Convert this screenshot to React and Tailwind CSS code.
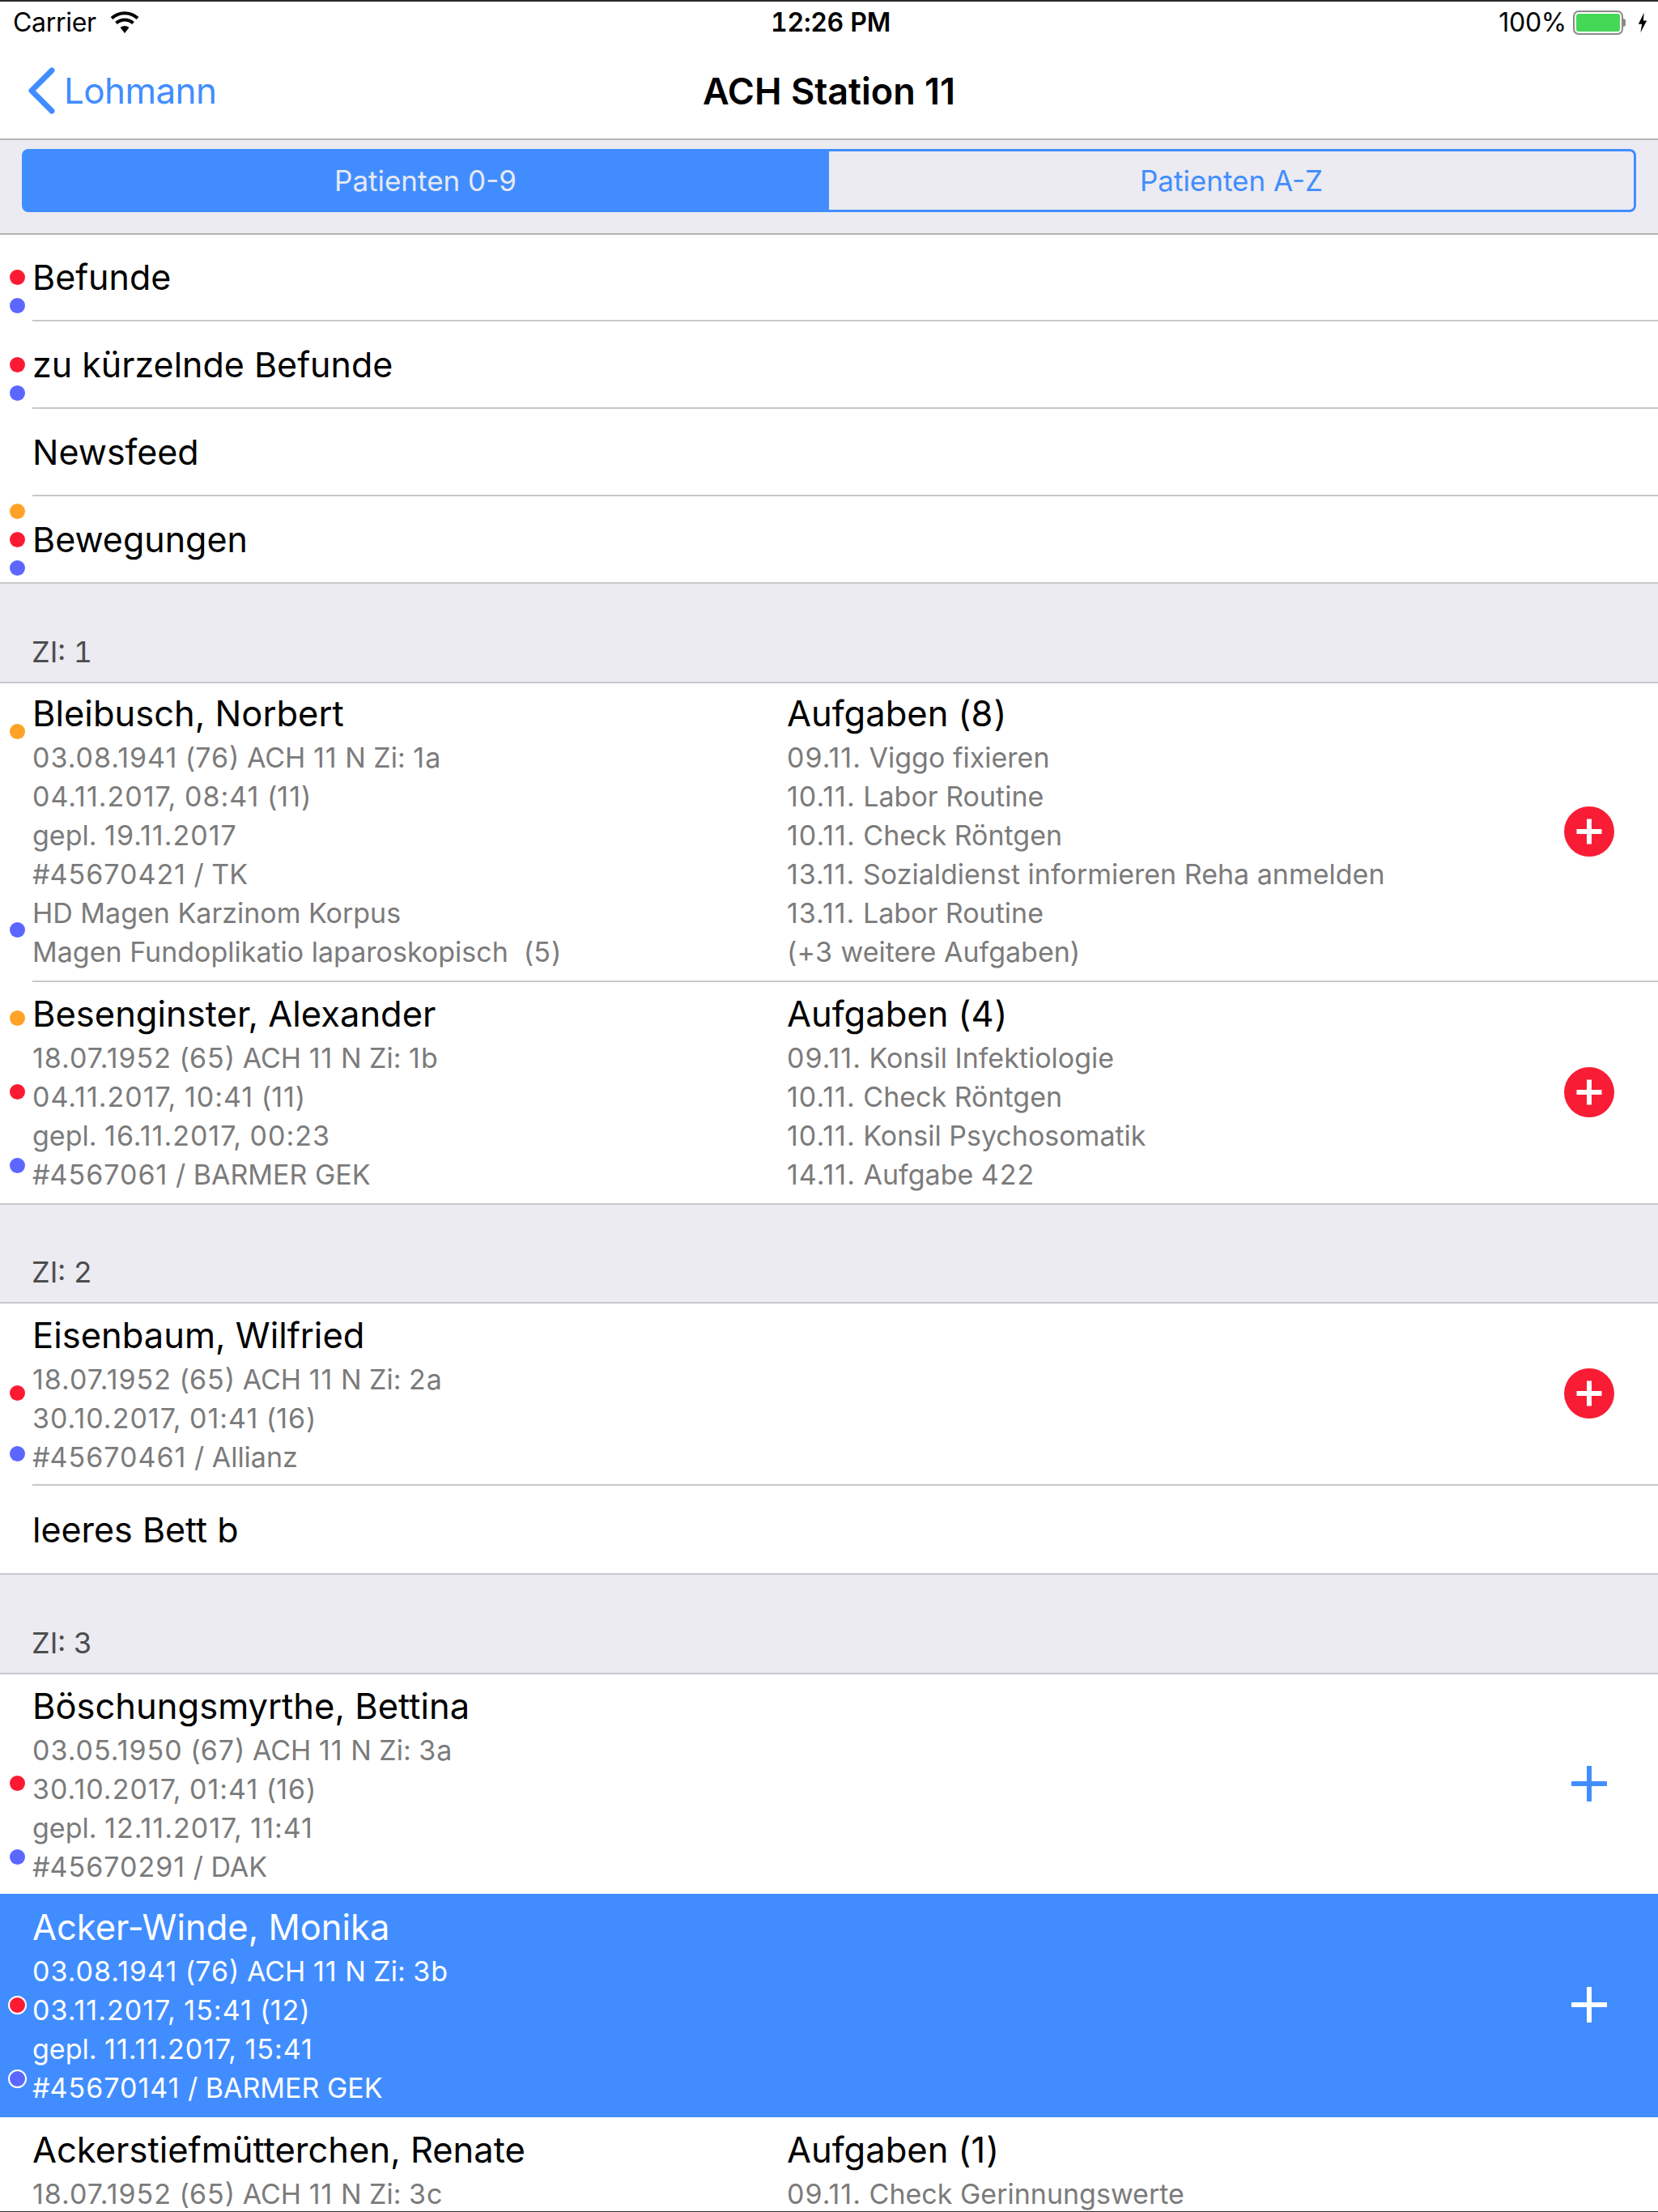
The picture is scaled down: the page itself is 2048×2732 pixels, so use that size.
const FONT = "font-['Inter',sans-serif]"

// digits sit a little wider in the reference's font
const spaced = (text) =>
  text.split(/(\d[\d.:,]*)/).map((part, i) =>
    i % 2 ? <span key={i} className="tracking-[1px]">{part}</span> : part
  )

const Dot = ({ color, top, ring }) => (
  <span
    className={`absolute left-[12px] block rounded-full ${color} ${top} ${ring ? 'w-[23px] h-[23px] -ml-[2px] -mt-[2px] border-[2px] border-white' : 'w-[19px] h-[19px]'}`}
  />
)

function RedPlus() {
  return (
    <svg width="62" height="62" viewBox="0 0 62 62">
      <circle cx="31" cy="31" r="31" fill="#f81d35" />
      <path d="M15.5 31h31M31 15.5v31" stroke="#fff" strokeWidth="6" />
    </svg>
  )
}

function LinePlus({ color }) {
  return (
    <svg width="44" height="44" viewBox="0 0 44 44">
      <path d="M1.5 22h41M22 1.5v41" stroke={color} strokeWidth="6" strokeLinecap="round" />
    </svg>
  )
}

function MenuRow({ label, dots, last, height = 'h-[108px]' }) {
  return (
    <div className={`relative flex flex-col bg-white ${height}`}>
      {dots.map((d, i) => <Dot key={i} {...d} />)}
      <div className="flex-1 pl-[40px] flex items-center text-[43px] text-black">{label}</div>
      <div className={`h-[2px] bg-[#c8c7cc] ${last ? '' : 'ml-[40px]'}`} />
    </div>
  )
}

function SectionHeader({ label, height = 'h-[123px]' }) {
  return (
    <div className={`bg-[#ebebf1] flex flex-col justify-end ${height}`}>
      <div className="pl-[39px] pb-[15px] text-[36px] leading-[44px] tabular-nums text-[#4d4d4f]">{label}</div>
      <div className="h-[2px] bg-[#c8c7cc]" />
    </div>
  )
}

function TextColumn({ title, lines, main, sub }) {
  return (
    <>
      <div className={`h-[56px] leading-[50px] text-[43.5px] ${main}`}>{spaced(title)}</div>
      {lines.map((l) => (
        <div key={l} className={`h-[48px] leading-[48px] text-[34px] whitespace-pre ${sub}`}>{spaced(l)}</div>
      ))}
    </>
  )
}

function PatientRow({ name, lines, tasksTitle, tasks, dots, action, selected, last, cut, height, pt = 'pt-[14px]' }) {
  const main = selected ? 'text-white' : 'text-black'
  const sub = selected ? 'text-white' : 'text-[#7b7b7b]'
  return (
    <div className={`relative flex flex-col ${height} ${selected ? 'bg-[#418dff]' : 'bg-white'}`}>
      {dots.map((d, i) => <Dot key={i} ring={selected} {...d} />)}
      <div className="flex-1 min-h-0 flex pl-[40px]">
        <div className={`w-[932px] shrink-0 ${pt}`}>
          <TextColumn title={name} lines={lines} main={main} sub={sub} />
        </div>
        <div className={`flex-1 ${pt}`}>
          {tasks && <TextColumn title={tasksTitle} lines={tasks} main={main} sub={sub} />}
        </div>
        {action && (
          <div className="w-[170px] shrink-0 pb-[2px] flex items-center justify-center">{action}</div>
        )}
      </div>
      {!selected && !cut && <div className={`h-[2px] bg-[#c8c7cc] ${last ? '' : 'ml-[40px]'}`} />}
    </div>
  )
}

export default function App() {
  return (
    <div className={`w-[2048px] h-[2732px] overflow-hidden bg-white relative ${FONT}`}>
      <div className="h-[2px] bg-[#2a2a2a]" />
      {/* status bar */}
      <div className="h-[52px] grid grid-cols-3 items-center pl-[16px] pr-[12px] text-[32px] tracking-[-0.3px] text-black">
        <div className="flex items-center gap-[16px]">
          <span>Carrier</span>
          <svg width="38" height="28" viewBox="0 0 38 28">
            <path d="M19 27l-5.5-7a8.5 8.5 0 0 1 11 0z" fill="#000" />
            <path d="M8.5 14.5a15.5 15.5 0 0 1 21 0" fill="none" stroke="#000" strokeWidth="4" />
            <path d="M3 8.5a23.5 23.5 0 0 1 32 0" fill="none" stroke="#000" strokeWidth="4" />
          </svg>
        </div>
        <div className="text-center font-semibold tabular-nums">12:26 PM</div>
        <div className="flex items-center justify-end">
          <span className="mr-[8px]">100%</span>
          <div className="w-[62px] h-[30px] rounded-[7px] border-[2px] border-[#8a8a8a] p-[2px]">
            <div className="w-full h-full rounded-[3px] bg-[#45d856]" />
          </div>
          <div className="w-[3px] h-[10px] rounded-r-[3px] bg-[#8a8a8a]" />
          <svg width="14" height="26" viewBox="0 0 14 30" className="ml-[14px]">
            <path d="M9 1L1 17h5l-2 12 9-17H8z" fill="#000" />
          </svg>
        </div>
      </div>
      {/* nav bar */}
      <div className="relative h-[117px] flex items-center justify-center">
        <div className="absolute left-[33px] top-[25px] flex items-center text-[#418dff]">
          <svg width="36" height="58" viewBox="0 0 36 58">
            <path d="M31 4L6 29l25 25" fill="none" stroke="#418dff" strokeWidth="7" strokeLinecap="round" strokeLinejoin="round" />
          </svg>
          <span className="ml-[10px] text-[44px] tracking-[-0.6px]">Lohmann</span>
        </div>
        <div className="text-[45px] font-semibold text-black">ACH Station 11</div>
      </div>
      {/* segmented control */}
      <div className="h-[119px] bg-[#ebebf1] border-t-[2px] border-b-[2px] border-[#b5b5b7] px-[27px] pt-[11px]">
        <div className="h-[78px] flex text-[35px]">
          <div className="w-[997px] rounded-l-[8px] bg-[#418dff] text-[#e6e9f3] flex items-center justify-center">Patienten 0-9</div>
          <div className="flex-1 rounded-r-[8px] border-[3px] border-l-0 border-[#418dff] text-[#418dff] flex items-center justify-center">Patienten A-Z</div>
        </div>
      </div>

      <MenuRow height="h-[107px]" label="Befunde" dots={[{ color: 'bg-[#fc1a33]', top: 'top-[43px]' }, { color: 'bg-[#5b67ff]', top: 'top-[78px]' }]} />
      <MenuRow label="zu kürzelnde Befunde" dots={[{ color: 'bg-[#fc1a33]', top: 'top-[44px]' }, { color: 'bg-[#5b67ff]', top: 'top-[79px]' }]} />
      <MenuRow label="Newsfeed" dots={[]} />
      <MenuRow last label="Bewegungen" dots={[{ color: 'bg-[#ffa227]', top: 'top-[9px]' }, { color: 'bg-[#fc1a33]', top: 'top-[44px]' }, { color: 'bg-[#5b67ff]', top: 'top-[79px]' }]} />

      <SectionHeader label="ZI: 1" />
      <PatientRow
        height="h-[369px]"
        pt="pt-[12px]"
        name="Bleibusch, Norbert"
        lines={['03.08.1941 (76) ACH 11 N Zi: 1a', '04.11.2017, 08:41 (11)', 'gepl. 19.11.2017', '#45670421 / TK', 'HD Magen Karzinom Korpus', 'Magen Fundoplikatio laparoskopisch  (5)']}
        tasksTitle="Aufgaben (8)"
        tasks={['09.11. Viggo fixieren', '10.11. Labor Routine', '10.11. Check Röntgen', '13.11. Sozialdienst informieren Reha anmelden', '13.11. Labor Routine', '(+3 weitere Aufgaben)']}
        dots={[{ color: 'bg-[#ffa227]', top: 'top-[50px]' }, { color: 'bg-[#5b67ff]', top: 'top-[295px]' }]}
        action={<RedPlus />}
      />
      <PatientRow
        last
        height="h-[275px]"
        name="Besenginster, Alexander"
        lines={['18.07.1952 (65) ACH 11 N Zi: 1b', '04.11.2017, 10:41 (11)', 'gepl. 16.11.2017, 00:23', '#4567061 / BARMER GEK']}
        tasksTitle="Aufgaben (4)"
        tasks={['09.11. Konsil Infektiologie', '10.11. Check Röntgen', '10.11. Konsil Psychosomatik', '14.11. Aufgabe 422']}
        dots={[{ color: 'bg-[#ffa227]', top: 'top-[35px]' }, { color: 'bg-[#fc1a33]', top: 'top-[126px]' }, { color: 'bg-[#5b67ff]', top: 'top-[217px]' }]}
        action={<RedPlus />}
      />

      <SectionHeader height="h-[122px]" label="ZI: 2" />
      <PatientRow
        height="h-[225px]"
        name="Eisenbaum, Wilfried"
        lines={['18.07.1952 (65) ACH 11 N Zi: 2a', '30.10.2017, 01:41 (16)', '#45670461 / Allianz']}
        dots={[{ color: 'bg-[#fc1a33]', top: 'top-[101px]' }, { color: 'bg-[#5b67ff]', top: 'top-[176px]' }]}
        action={<RedPlus />}
      />
      <MenuRow last height="h-[110px]" label="leeres Bett b" dots={[]} />

      <SectionHeader label="ZI: 3" />
      <PatientRow
        cut
        height="h-[271px]"
        name="Böschungsmyrthe, Bettina"
        lines={['03.05.1950 (67) ACH 11 N Zi: 3a', '30.10.2017, 01:41 (16)', 'gepl. 12.11.2017, 11:41', '#45670291 / DAK']}
        dots={[{ color: 'bg-[#fc1a33]', top: 'top-[125px]' }, { color: 'bg-[#5b67ff]', top: 'top-[216px]' }]}
        action={<LinePlus color="#418dff" />}
      />
      <PatientRow
        selected
        height="h-[276px]"
        pt="pt-[16px]"
        name="Acker-Winde, Monika"
        lines={['03.08.1941 (76) ACH 11 N Zi: 3b', '03.11.2017, 15:41 (12)', 'gepl. 11.11.2017, 15:41', '#45670141 / BARMER GEK']}
        dots={[{ color: 'bg-[#fc1a33]', top: 'top-[128px]' }, { color: 'bg-[#5b67ff]', top: 'top-[219px]' }]}
        action={<LinePlus color="#ffffff" />}
      />
      <PatientRow
        cut
        pt="pt-[15px]"
        name="Ackerstiefmütterchen, Renate"
        lines={['18.07.1952 (65) ACH 11 N Zi: 3c']}
        tasksTitle="Aufgaben (1)"
        tasks={['09.11. Check Gerinnungswerte']}
        dots={[]}
      />
      <div className="absolute left-0 right-0 bottom-0 h-[1px] bg-[#2a2a2a]" />
    </div>
  )
}
